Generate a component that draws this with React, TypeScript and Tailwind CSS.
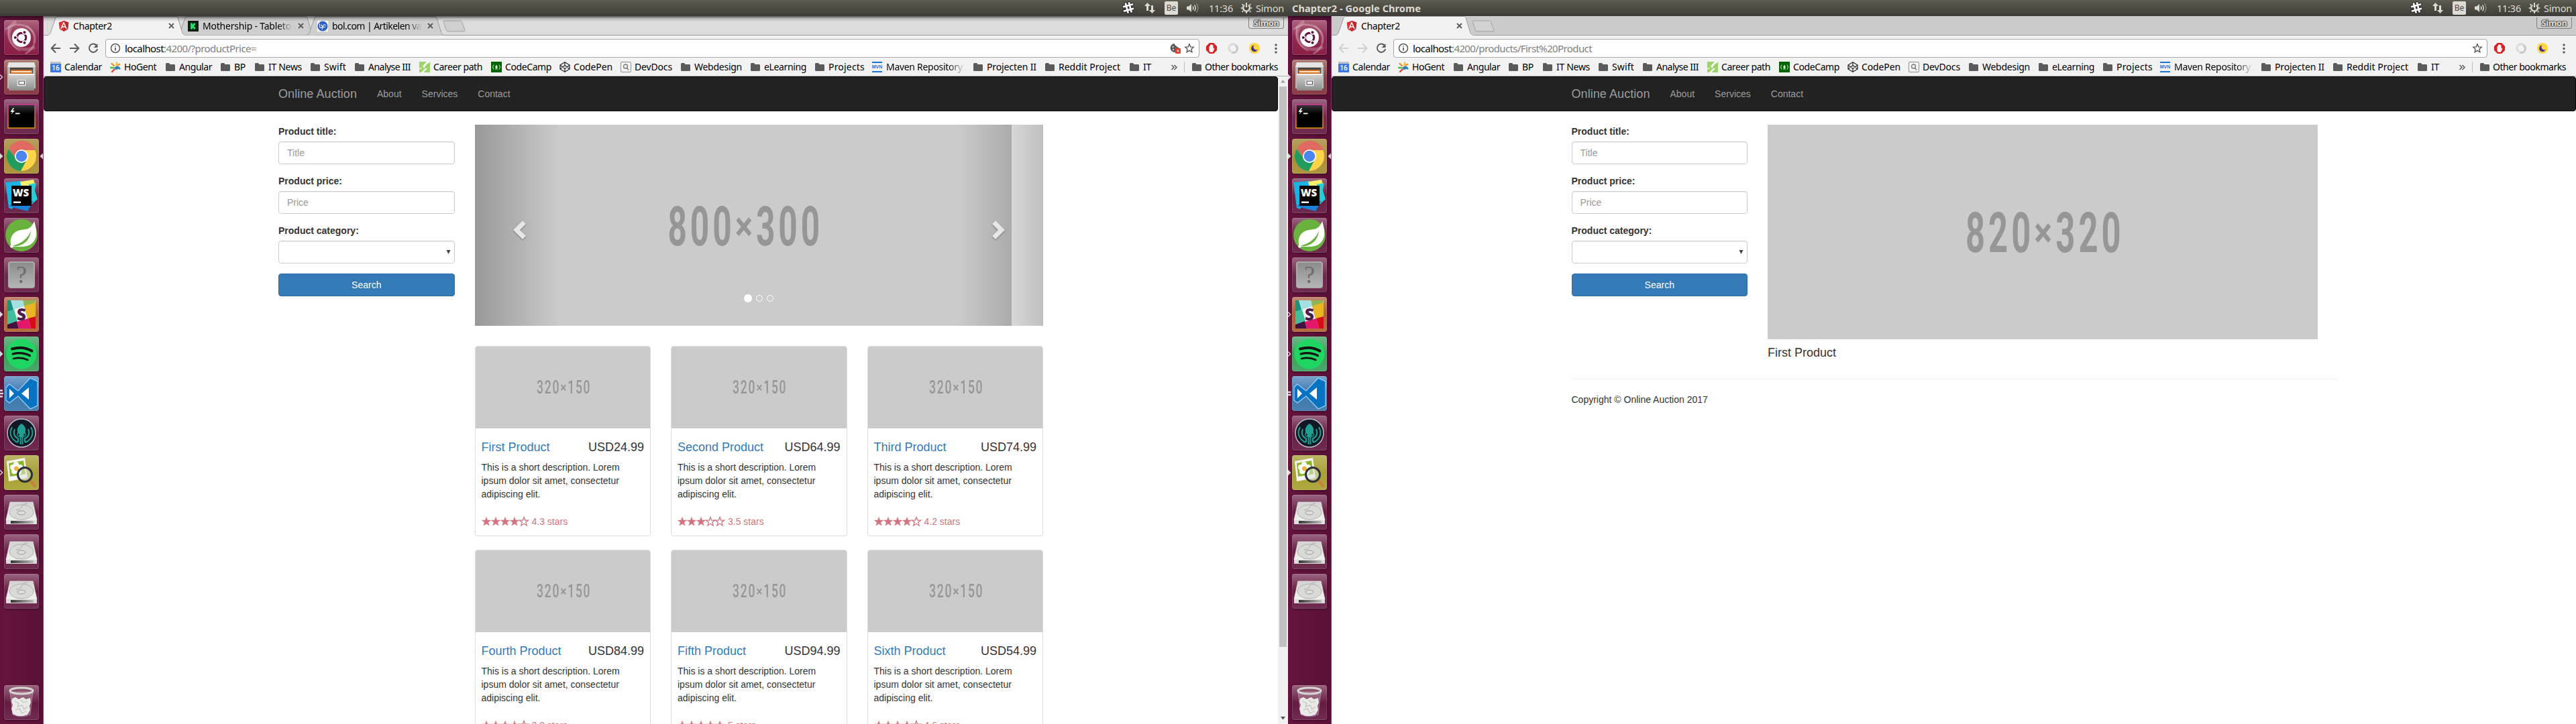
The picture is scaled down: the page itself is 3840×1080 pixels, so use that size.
import React, { useLayoutEffect, useRef, useState } from "react";

const UI = "font-['Noto_Sans','Open_Sans',sans-serif]";

/** Single line of text tracked so that it takes exactly `w` pixels. */
function Fit({ w, className = "", children }: { w: number; className?: string; children: string }) {
  const ref = useRef<HTMLSpanElement>(null);
  const [ls, setLs] = useState(0);
  useLayoutEffect(() => {
    const el = ref.current;
    if (!el) return;
    const prev = el.style.letterSpacing;
    el.style.letterSpacing = "0px";
    const n = el.getBoundingClientRect().width;
    el.style.letterSpacing = prev;
    setLs((w - n) / children.length);
  }, [w, children]);
  return (
    <span ref={ref} className={`inline-block whitespace-nowrap ${className}`} style={{ letterSpacing: `${ls}px` }}>
      {children}
    </span>
  );
}

/** Grey placeholder picture with condensed caption. */
function Placeholder({ text, w, className, textClass }: { text: string; w: number; className: string; textClass: string }) {
  const ref = useRef<HTMLSpanElement>(null);
  const [k, setK] = useState(1);
  useLayoutEffect(() => {
    if (ref.current) setK(w / ref.current.offsetWidth);
  }, [w]);
  const [a, b] = text.split("×");
  return (
    <div className={`flex items-center justify-center overflow-hidden bg-[#cbcbcb] ${className}`}>
      <span
        ref={ref}
        className={`inline-block whitespace-nowrap font-[Roboto,sans-serif] leading-none text-[#969696] ${textClass}`}
        style={{ transform: `scaleX(${k})` }}
      >
        {a}
        <span className="inline-block scale-y-[.72]">×</span>
        {b}
      </span>
    </div>
  );
}

/* ---------- top panel ---------- */

function TopPanel({ title }: { title?: string }) {
  return (
    <div className={`flex h-6 w-full items-center bg-gradient-to-b from-[#5e5b50] to-[#3d3c38] pr-1.5 text-[14.5px] leading-6 text-[#dfdbd2] ${UI}`}>
      <div className="pl-1.5 font-bold">{title && <Fit w={192}>{title}</Fit>}</div>
      <div className="ml-auto flex items-center">
        <div className="flex w-8 justify-center">
          <svg width="20" height="20" viewBox="0 0 20 20" fill="none" strokeLinecap="round">
            <g stroke="#2e2d2a" strokeWidth="5"><path d="M6 3.5l3.5 13M11 2.5l3.5 13M3 8l13-3.5M4 14.5l13-3.5" /></g>
            <g stroke="#fff" strokeWidth="2.8"><path d="M6 3.5l3.5 13M11 2.5l3.5 13M3 8l13-3.5M4 14.5l13-3.5" /></g>
          </svg>
        </div>
        <div className="flex w-8 justify-center">
          <svg width="18" height="18" viewBox="0 0 18 18" fill="#dfdbd2">
            <path d="M5.5 1L10 6H7v7H4V6H1z" /><path d="M12.500 17L8 12h3V5h3v7h3z" />
          </svg>
        </div>
        <div className="flex w-8 justify-center">
          <div className="flex h-5 w-5 items-center justify-center rounded-[2px] bg-[#dfdbd2] text-[12px] leading-none text-[#4a4843]">Be</div>
        </div>
        <div className="flex w-8 justify-center">
          <svg width="20" height="18" viewBox="0 0 20 18" fill="none" stroke="#dfdbd2" strokeWidth="1.500">
            <path d="M1 6.500h3l4-3.500v12l-4-3.500H1z" fill="#dfdbd2" stroke="none" />
            <path d="M10 6.500q1.800 2.500 0 5M12.500 4.500q3.500 4.500 0 9" /><path d="M15.500 2.500q5 6.500 0 13" opacity=".4" />
          </svg>
        </div>
        <Fit w={36} className="ml-2">11:36</Fit>
        <svg className="ml-2.5" width="20" height="18" viewBox="0 0 20 18" fill="none" stroke="#dfdbd2">
          <path d="M7 4.700a5 5 0 1 0 6 0" strokeWidth="2.400" />
          <path d="M10 1v7" strokeWidth="2" />
          <path d="M10 14.500V17M3.500 9H1.800M18.200 9h-1.700M5 13.500l-1.400 1.400M15 13.500l1.400 1.400M5 4.500L3.600 3.100M15 4.500l1.400-1.400" strokeWidth="2" />
        </svg>
        <Fit w={42} className="ml-1">Simon</Fit>
      </div>
    </div>
  );
}

/* ---------- launcher ---------- */

const DiskIcon = () => (
  <svg width="52" height="52" viewBox="0 0 52 52">
    <defs>
      <linearGradient id="dk" x1="0" y1="0" x2="0" y2="1"><stop offset="0" stopColor="#d2d2d0" /><stop offset="1" stopColor="#f2f2f0" /></linearGradient>
      <linearGradient id="dk2" x1="0" y1="0" x2="1" y2="0"><stop offset="0" stopColor="#333" /><stop offset="1" stopColor="#bbb" /></linearGradient>
    </defs>
    <path d="M9 11h34l6 27H3z" fill="url(#dk)" stroke="#e6e6e4" strokeWidth=".8" />
    <ellipse cx="26" cy="26" rx="18" ry="11" fill="#d9d9d7" stroke="#b0b0ae" strokeWidth="1" />
    <ellipse cx="26" cy="27" rx="6" ry="3" fill="#dededc" stroke="#9a9a98" strokeWidth="1" />
    <path d="M35 13C24 13 29 23 18 23" fill="none" stroke="#a8a8a6" strokeWidth="1" />
    <path d="M3 38h46v6H3z" fill="#dcdcda" /><path d="M10 39h34v4H10z" fill="url(#dk2)" />
  </svg>
);

const icons: Record<string, React.ReactNode> = {
  ubuntu: (
    <svg width="52" height="52" viewBox="0 0 52 52" fill="none">
      <path d="M2 14C18 0 42 8 46 24c2 12-6 22-14 26" stroke="#fff" strokeOpacity=".28" strokeWidth="2.500" />
      <path d="M18 2c-14 8-14 28 0 38 8 5 20 5 28 0" stroke="#fff" strokeOpacity=".22" strokeWidth="5" />
      <path d="M8 8c-4 14 0 30 16 38M32 8c10 4 14 14 12 26" stroke="#fff" strokeOpacity=".18" strokeWidth="2.500" />
      <circle cx="26" cy="26" r="14" fill="#fff" />
      <circle cx="26" cy="26" r="6.800" stroke="#5e1138" strokeWidth="3" />
      <g stroke="#fff" strokeWidth="1.500" fill="#5e1138"><circle cx="16.800" cy="26" r="2.800" /><circle cx="30.500" cy="18.200" r="2.800" /><circle cx="30.500" cy="33.800" r="2.800" /></g>
    </svg>
  ),
  files: (
    <svg width="52" height="52" viewBox="0 0 52 52">
      <defs><linearGradient id="fc" x1="0" y1="0" x2="0" y2="1"><stop offset="0" stopColor="#d4d4d2" /><stop offset="1" stopColor="#8c8c8a" /></linearGradient></defs>
      <path d="M7 4h38l2 6v33H5V10z" fill="#b9b9b7" /><path d="M7 4h38l2 7H5z" fill="#e4e4e2" />
      <path d="M9 12h34v12H9z" fill="#4b4540" /><path d="M10 15h32v7H10z" fill="#d4722c" /><path d="M11 17h30v2H11z" fill="#fbe3c0" />
      <path d="M7 21h38v25H7z" fill="url(#fc)" /><path d="M7 21h38v2H7z" fill="#f2f2f0" />
      <rect x="19.500" y="29.500" width="13" height="10" rx="2" fill="#eee" stroke="#bcbcbc" /><rect x="22" y="32" width="8.500" height="5" fill="#f6f6f6" stroke="#444" />
    </svg>
  ),
  terminal: (
    <svg width="52" height="52" viewBox="0 0 52 52">
      <defs>
        <linearGradient id="tm" x1="0" y1="0" x2="0" y2="1"><stop offset="0" stopColor="#d8399b" /><stop offset="1" stopColor="#e8980f" /></linearGradient>
        <linearGradient id="tg" x1="0" y1="0" x2="0" y2="1"><stop offset="0" stopColor="#3a3a3a" /><stop offset=".4" stopColor="#000" /></linearGradient>
      </defs>
      <rect x="6" y="8" width="40" height="35" fill="url(#tg)" stroke="url(#tm)" strokeWidth="1.500" />
      <path d="M13.500 13l-4 6h3l-2.500 4 6-6h-3l2-4zM17 20.500h6.500v1.800H17z" fill="#fff" />
    </svg>
  ),
  chrome: (
    <svg width="52" height="52" viewBox="0 0 52 52">
      <circle cx="26" cy="26" r="22" fill="#fdd34a" />
      <path d="M6.900 15A22 22 0 0 1 47 17H26a9 9 0 0 0-8 13z" fill="#e06a5f" />
      <path d="M6.900 15A22 22 0 0 0 25 48l9-17a9 9 0 0 1-16-1z" fill="#219c5e" />
      <circle cx="26" cy="26" r="10" fill="#fff" /><circle cx="26" cy="26" r="8.300" fill="#4a86ee" />
    </svg>
  ),
  webstorm: (
    <>
      <svg width="52" height="52" viewBox="0 0 52 52">
        <path d="M2 6l22-2 8 6-20 36-5-2z" fill="#1bb4e2" /><path d="M24 5l20-3 3 9-19 10z" fill="#f7ee6b" />
        <path d="M37 9l11-2-2 11 4 13-10 9-8-12z" fill="#21cfd4" /><path d="M7 42l28 7 9-15-25-4z" fill="#1a82d8" />
        <rect x="11" y="11" width="30" height="30" fill="#000" /><path d="M14 34.500h11v2.500H14z" fill="#fff" />
      </svg>
      <span className="absolute left-[13px] top-[13px] font-['Open_Sans',sans-serif] text-[15px] font-extrabold leading-4 text-white">WS</span>
    </>
  ),
  spring: (
    <svg width="52" height="52" viewBox="0 0 52 52">
      <circle cx="26" cy="26" r="24" fill="#69b23e" />
      <path d="M45 5c5 16 5 28-6 35-7 4-16 3-24 3-5 0-6-6-5-11 3-13 14-14 22-15 7-1 10-5 13-12z" fill="#fff" />
      <path d="M40 19c-4 12-14 19-28 23 15 2 27-8 28-23z" fill="#69b23e" /><circle cx="11.500" cy="42.500" r="2.200" fill="#fff" />
    </svg>
  ),
  unknown: (
    <div className="flex h-10 w-10 items-center justify-center rounded-sm border-2 border-[#aaa] bg-gradient-to-b from-[#8d8d8d] to-[#b4b4b4] font-['Liberation_Serif',serif] text-[36px] leading-none text-[#6c6c6c]">?</div>
  ),
  slack: (
    <>
      <svg width="52" height="52" viewBox="0 0 52 52">
        <path d="M5 5h42v42H5z" fill="#f7f5f7" />
        <path d="M5 5h6l4 14-10 3z" fill="#1a937d" /><path d="M10 5h18l2 9-16 5z" fill="#a4dfe4" /><path d="M28 5h19l-1 4-16 5z" fill="#93b453" />
        <path d="M30 14l17-6v22l-12 3z" fill="#ebb424" /><path d="M5 22l10-3 5 17-15 5z" fill="#3fbf9c" />
        <path d="M5 41l14-5 3 11H5z" fill="#3e1340" /><path d="M19 37l17-5 4 15H22z" fill="#e4166a" /><path d="M36 32l11-3v18h-7z" fill="#d40e18" />
      </svg>
      <span className="absolute left-[19px] top-[14px] font-['Open_Sans',sans-serif] text-[24px] font-extrabold leading-6 text-[#4b1a4e]">S</span>
    </>
  ),
  spotify: (
    <svg width="52" height="52" viewBox="0 0 52 52" fill="none" stroke="#141414" strokeLinecap="round">
      <circle cx="26" cy="26" r="22.500" fill="#1fd662" stroke="none" />
      <path d="M12 18.500c10-3 21-2 29.500 3" strokeWidth="4" /><path d="M13 26c9-2.500 18-1.500 25.500 2.500" strokeWidth="3.200" /><path d="M14 33c8-2 15.500-1 21.500 2" strokeWidth="2.600" />
    </svg>
  ),
  vscode: (
    <svg width="52" height="52" viewBox="0 0 52 52">
      <path d="M3 17l5-5 13 10L39 3l11 5v36l-11 5-18-19L8 40l-5-4z" fill="#0873c2" stroke="#9ed0f5" strokeWidth="1.200" />
      <path d="M8 19v14l7-7zM37 17v18L26 26z" fill="#fff" />
    </svg>
  ),
  kraken: (
    <svg width="52" height="52" viewBox="0 0 52 52" fill="none">
      <circle cx="26" cy="26" r="21" fill="#121826" stroke="#b9bcc0" strokeWidth="1.500" />
      <g stroke="#1fa093" strokeWidth="2">
        <path d="M12 17c-5 9-2 18 8 23M16 20c-3 8 0 12 5 14v6M40 17c5 9 2 18-8 23M36 20c3 8 0 12-5 14v6M24.500 32v11M27.500 32v11" />
      </g>
      <path d="M26 12c5 3 7 8 6 11-1 2 1 3 1 6 0 4-14 4-14 0 0-3 2-4 1-6-1-3 1-8 6-11z" fill="#1fa093" />
      <circle cx="21.500" cy="28.500" r="1.400" fill="#121826" /><circle cx="30.500" cy="28.500" r="1.400" fill="#121826" />
    </svg>
  ),
  viewer: (
    <svg width="52" height="52" viewBox="0 0 52 52" fill="none">
      <path d="M4 9l27-5 4 30-28 5z" fill="#f4f4f0" /><path d="M7 12l22-4 3 20-23 4z" fill="#8ab62c" />
      <g fill="#fff"><circle cx="18" cy="14" r="4" /><circle cx="13" cy="18" r="4" /><circle cx="15" cy="24" r="4" /><circle cx="22" cy="25" r="4" /><circle cx="24" cy="18" r="4" /></g>
      <circle cx="18.500" cy="20" r="3.500" fill="#f0b52c" />
      <path d="M38 37l8 9" stroke="#c77f3a" strokeWidth="4" strokeLinecap="round" />
      <circle cx="31" cy="29" r="10.500" fill="#dfe8dc" fillOpacity=".55" stroke="#2b3036" strokeWidth="3" />
    </svg>
  ),
  disk: <DiskIcon />,
  trash: (
    <svg width="52" height="52" viewBox="0 0 52 52" fill="none">
      <path d="M9 10h34l-4 34q-13 6-26 0z" fill="#fff" fillOpacity=".22" stroke="#fff" strokeOpacity=".3" />
      <path d="M12 20l5-2 5 3 6-3 5 3 6-2 1 7-2 5 1 6-4 7-7 2-8 0-7-3-2-8 2-5-2-5z" fill="#e9e9e7" />
      <path d="M16 24l6 3-2 5 7-2 3 6 5-4M17 37l6-2 4 7 6-3M25 22l4 4 6-2" stroke="#c2c2c0" strokeWidth="1.300" />
      <ellipse cx="26" cy="8.500" rx="17" ry="4.500" stroke="#d6d6d4" strokeWidth="3" />
    </svg>
  ),
};

type Mark = "open" | "full" | "bars3" | "bars2" | undefined;
const tiles: { icon: string; bg: string; m: [Mark, Mark] }[] = [
  { icon: "ubuntu", bg: "from-[#b0647f] via-[#8f2850] to-[#8c1f48]", m: [undefined, undefined] },
  { icon: "files", bg: "from-[#b08078] via-[#8a4448] to-[#8c3c48]", m: ["open", "full"] },
  { icon: "terminal", bg: "from-[#9a6580] via-[#6f2a4c] to-[#702c50]", m: [undefined, undefined] },
  { icon: "chrome", bg: "from-[#b3a05f] via-[#b08c3a] to-[#ac9440]", m: ["full", "full"] },
  { icon: "webstorm", bg: "from-[#9a6580] via-[#661c42] to-[#702c50]", m: [undefined, undefined] },
  { icon: "spring", bg: "from-[#9a6580] via-[#661c42] to-[#702c50]", m: [undefined, undefined] },
  { icon: "unknown", bg: "from-[#9a6580] via-[#6c2a4a] to-[#702c50]", m: [undefined, undefined] },
  { icon: "slack", bg: "from-[#c08a70] via-[#b0603c] to-[#b86c40]", m: ["full", "open"] },
  { icon: "spotify", bg: "from-[#6cb888] via-[#38a058] to-[#4aa86c]", m: ["full", "open"] },
  { icon: "vscode", bg: "from-[#7aa4cc] via-[#3a78b0] to-[#4a80b0]", m: ["bars3", "bars2"] },
  { icon: "kraken", bg: "from-[#9a6580] via-[#661c42] to-[#702c50]", m: [undefined, undefined] },
  { icon: "viewer", bg: "from-[#bdb668] via-[#a8a034] to-[#b0a840]", m: ["open", "full"] },
  { icon: "disk", bg: "from-[#9a6580] via-[#661c42] to-[#702c50]", m: [undefined, undefined] },
  { icon: "disk", bg: "from-[#9a6580] via-[#661c42] to-[#702c50]", m: [undefined, undefined] },
  { icon: "disk", bg: "from-[#9a6580] via-[#661c42] to-[#702c50]", m: [undefined, undefined] },
];

function MarkShape({ m }: { m: Mark }) {
  if (!m) return null;
  return (
    <svg className="absolute -left-1.5 top-5" width="5" height="12" viewBox="0 0 5 12" fill="none">
      {m === "full" && <path d="M0 1.500v9L4.500 6z" fill="#ddd5da" />}
      {m === "open" && <path d="M0 2.500L3.700 6 0 9.500" stroke="#ddd5da" strokeWidth="1.300" />}
      {m === "bars3" && <path d="M0 1.500h4M0 6h5M0 10.500h4" stroke="#ddd5da" strokeWidth="2.400" />}
      {m === "bars2" && <path d="M0 4h4.500M0 8h4.500" stroke="#ddd5da" strokeWidth="2.400" />}
    </svg>
  );
}

function Tile({ icon, bg, m, focused }: { icon: string; bg: string; m?: Mark; focused?: boolean }) {
  return (
    <div className={`relative flex h-[52px] w-[52px] shrink-0 items-center justify-center rounded bg-gradient-to-b shadow-[0_1px_3px_rgba(0,0,0,.45),inset_0_0_0_1px_rgba(255,255,255,.13)] ${bg}`}>
      {icons[icon]}
      <MarkShape m={m} />
      {focused && (
        <svg className="absolute -right-[6px] top-5" width="5" height="12" viewBox="0 0 5 12"><path d="M5 1.500v9L.5 6z" fill="#ddd5da" /></svg>
      )}
    </div>
  );
}

function Launcher({ screen }: { screen: 0 | 1 }) {
  return (
    <div className="flex w-[65px] shrink-0 flex-col gap-[7px] border-r border-[#7c3f68] bg-gradient-to-r from-[#66143c] to-[#5b1035] pb-1.5 pl-1.5 pt-1.5 shadow-[inset_0_5px_5px_-3px_rgba(0,0,0,.6)]">
      {tiles.map((t, i) => (
        <Tile key={i} icon={t.icon} bg={t.bg} m={t.m[screen]} focused={t.icon === "chrome"} />
      ))}
      <div className="mt-auto">
        <Tile icon="trash" bg="from-[#9a6580] via-[#661c42] to-[#702c50]" />
      </div>
    </div>
  );
}

/* ---------- browser chrome ---------- */

const AngularIcon = () => (
  <svg width="16" height="16" viewBox="0 0 16 16">
    <path d="M8 0l7.300 2.600-1.100 9.600L8 16l-6.200-3.800L.7 2.600z" fill="#dd3138" /><path d="M8 0l7.300 2.600-1.100 9.600L8 16z" fill="#b9292f" />
    <path d="M8 2.500L4 12M8 2.500L12 12M5.600 9h4.800" stroke="#fff" strokeWidth="1.500" fill="none" />
  </svg>
);
const KickIcon = () => (
  <svg width="16" height="16" viewBox="0 0 16 16"><path d="M0 0h16v16H0z" fill="#0d1f12" /><path d="M5.500 3.500v9M10.800 4L7 8l3.800 4" stroke="#2bde73" strokeWidth="2.800" fill="none" /></svg>
);
const BolIcon = () => (
  <svg width="16" height="16" viewBox="0 0 16 16" fill="none"><path d="M0 0h16v16H0z" fill="#fff" /><circle cx="8" cy="8" r="7.500" fill="#2b62c9" /><path d="M3.500 4v5a2 2 0 1 0 1.500-2.500M12.500 7.500a2 2 0 1 0-3 2h2.500M7 13l2-6" stroke="#dbe6fa" strokeWidth="1.100" /></svg>
);

type TabData = { icon: React.ReactNode; text: string; w: number; fade?: boolean };

function Tab({ tab, active }: { tab: TabData; active: boolean }) {
  const fill = active ? "#f2f2f2" : "#cfcfcf";
  return (
    <div className={`relative -mr-3 h-[29px] w-[205px] ${active ? "z-10" : ""}`}>
      <svg className="absolute inset-0" width="205" height="29" viewBox="0 0 205 29">
        <path d="M.5 28.500Q3 28 4 25.500L12 2.500Q13 .5 15 .5H191Q193 .5 194 2.500L201 25.500Q202 28 205 28.500" fill={fill} stroke="#9c9c9c" />
        {active && <path d="M1.500 28.500H204" stroke={fill} strokeWidth="1.400" />}
      </svg>
      <div className="relative flex h-full items-center pl-4 pr-[15px]">
        {tab.icon}
        <div className={`ml-[6px] w-[134px] overflow-hidden text-[14px] leading-5 ${tab.fade ? "[mask-image:linear-gradient(90deg,#000_84%,transparent)]" : ""}`}>
          <Fit w={tab.w}>{tab.text}</Fit>
        </div>
        <svg className="ml-2" width="9" height="9" viewBox="0 0 9 9" stroke="#5a5a5a" strokeWidth="1.800"><path d="M1 1l7 7M8 1L1 8" /></svg>
      </div>
    </div>
  );
}

const Folder = () => (
  <svg width="16" height="16" viewBox="0 0 16 16" fill="#5a5a5a"><path d="M1 3.500q0-1.500 1.500-1.500H6l1.500 2H13.500Q15 4 15 5.500v7Q15 14 13.500 14h-11Q1 14 1 12.500z" /></svg>
);

const marks: Record<string, React.ReactNode> = {
  Calendar: (
    <div className="flex h-4 w-4 flex-col bg-[#3b78e7] text-center font-[Roboto,sans-serif] text-[10px] font-medium leading-[13px] text-white"><i className="h-[3px] w-full bg-[#c4c4c4]" />16</div>
  ),
  HoGent: (
    <svg width="16" height="16" viewBox="0 0 16 16" fill="none" strokeLinecap="round" strokeWidth="2.300">
      <path d="M9.500 5.500L10 1.500" stroke="#f7c51e" /><path d="M6 6L2.500 3" stroke="#f08a24" /><path d="M5.500 9H1" stroke="#54b948" /><path d="M6.500 11.500L3 15" stroke="#e03c31" /><path d="M12 5l2-1" stroke="#f08a24" />
      <path d="M7 9.500c3-5 8-2 8 2-2-2-3 0-4-1-1 2-3 1-4-1z" fill="#2a7fb5" stroke="#2a7fb5" strokeWidth="1" />
    </svg>
  ),
  "Career path": (
    <svg width="16" height="16" viewBox="0 0 16 16"><rect width="16" height="16" rx="1" fill="#9bd36a" /><path d="M11 0L4 7.500h3L6 10l4-2.500H7.500L16 0zM0 10l4-1.500L2 11H0zM9 10h3l-6 6H3z" fill="#fff" /></svg>
  ),
  CodeCamp: (
    <svg width="16" height="16" viewBox="0 0 16 16" fill="none" stroke="#cfe8cf"><path d="M0 0h16v16H0z" fill="#006400" stroke="none" /><path d="M4 4.500q-3 3.500 0 7M12 4.500q3 3.500 0 7M6 11h4" /><path d="M8 4.500q3 4 1 5.500H7q-2-2 1-5.500z" fill="#cfe8cf" stroke="none" /></svg>
  ),
  CodePen: (
    <svg width="16" height="16" viewBox="0 0 16 16" fill="none" stroke="#2c2c2c" strokeWidth="1.300" strokeLinejoin="round"><path d="M8 .8l7 4.200v6l-7 4.200L1 11V5zM8 .8v4.700M8 10.500v4.700M1 5l7 5.500L15 5M1 11l7-5.500 7 5.500" /></svg>
  ),
  DevDocs: (
    <svg width="16" height="16" viewBox="0 0 16 16" fill="none"><rect x=".5" y=".5" width="15" height="15" rx="1.500" fill="#f4f4f4" stroke="#8e8e8e" /><circle cx="7.500" cy="7" r="3" stroke="#777" strokeWidth="1.300" /><path d="M9.500 9.500l2.500 3" stroke="#777" strokeWidth="1.600" /></svg>
  ),
  "Maven Repository:": (
    <div className="flex h-4 w-[15px] flex-col items-center justify-center border-y-2 border-[#1976d2] font-['Liberation_Sans',sans-serif] text-[7px] font-bold leading-[8px] text-[#1976d2]">MVN</div>
  ),
};

/* [label, text width, cell width] */
const bookmarks: [string, number, number][] = [
  ["Calendar", 56, 89], ["HoGent", 48, 82], ["Angular", 49, 82], ["BP", 17, 51], ["IT News", 50, 83], ["Swift", 33, 66],
  ["Analyse III", 63, 97], ["Career path", 73, 107], ["CodeCamp", 69, 102], ["CodePen", 58, 91], ["DevDocs", 56, 89],
  ["Webdesign", 71, 104], ["eLearning", 63, 96], ["Projects", 54, 86], ["Maven Repository:", 117, 150], ["Projecten II", 74, 107],
  ["Reddit Project", 92, 126], ["IT", 12, 63],
];

function Browser({ tabs, path, pathW, focused, children }: { tabs: TabData[]; path: string; pathW: number; focused: boolean; children: React.ReactNode }) {
  const nav = focused ? "#d0d0d0" : "#5a5a5a";
  return (
    <div className="flex min-w-0 grow flex-col bg-white">
      <div className={`shrink-0 text-black ${UI}`}>
        <div className={`relative flex h-[29px] border-b border-[#9c9c9c] pl-1.5 ${focused ? "bg-[#cbcbcb]" : "bg-[#dcdcdc]"}`}>
          {tabs.map((t, i) => <Tab key={i} tab={t} active={i === 0} />)}
          <svg className="ml-[9px] mt-[6px]" width="36" height="18" viewBox="0 0 36 18"><path d="M3 1h24q2 0 2.500 1.500L34 15q.4 1.800-1.500 1.800H9Q7 16.800 6.400 15L2 2.500Q1.500 1 3 1z" fill={focused ? "#d2d2d2" : "#cfcfcf"} stroke="#a2a2a2" /></svg>
          <div className="ml-auto mr-1.5 mt-0.5 flex h-[17px] w-[53px] items-center justify-center rounded-b border border-t-0 border-[#808080] text-[13px] font-bold leading-none text-[#e0e0e0] [text-shadow:0_0_1px_#333,0_0_1px_#333,0_0_1px_#333,0_0_2px_#333,0_0_2px_#333]">
            <Fit w={38}>Simon</Fit>
          </div>
          {!focused && <div className="absolute inset-x-0 top-0 z-20 h-2 bg-gradient-to-b from-black/60 via-black/15 to-transparent" />}
        </div>
        <div className="flex h-[37px] items-center bg-[#f2f2f2] pl-1 pr-0.5">
          <div className="flex w-7 justify-center"><svg width="16" height="16" viewBox="0 0 16 16" fill="none" stroke={nav} strokeWidth="2"><path d="M8 1.500L1.700 8 8 14.500M2 8h13" /></svg></div>
          <div className="flex w-7 justify-center"><svg width="16" height="16" viewBox="0 0 16 16" fill="none" stroke={nav} strokeWidth="2"><path d="M8 1.500L14.300 8 8 14.500M14 8H1" /></svg></div>
          <div className="flex w-7 justify-center"><svg width="16" height="16" viewBox="0 0 16 16" fill="none" stroke="#5a5a5a" strokeWidth="2"><path d="M12.800 3.600A6.200 6.200 0 1 0 14.200 9" /><path d="M14.500 1v6h-6z" fill="#5a5a5a" stroke="none" /></svg></div>
          <div className="ml-1 mr-0.5 flex h-7 grow items-center rounded-sm border border-[#a6a6a6] bg-white pl-[6px] pr-[6px] text-[15px] leading-6">
            <svg width="16" height="16" viewBox="0 0 16 16" fill="none" stroke="#5a5a5a" strokeWidth="1.500"><circle cx="8" cy="8" r="6.500" /><path d="M8 7v4.500M8 4.200v1.600" strokeWidth="1.700" /></svg>
            <Fit w={58} className="ml-[6px]">localhost</Fit>
            <Fit w={pathW} className="text-[#808080]">{path}</Fit>
            <div className="ml-auto flex items-center gap-[5px]">
              {!focused && (
                <svg width="16" height="16" viewBox="0 0 16 16"><path d="M7 1a6.500 6.500 0 1 0 6.500 6.500q-1.500 0-1.800-1.500-2 .3-2.200-1.800Q7 4 7 1z" fill="#5a5a5a" /><circle cx="4.500" cy="6" r="1" fill="#fff" /><circle cx="5" cy="10" r="1" fill="#fff" /><rect x="8" y="8" width="8" height="8" rx="1" fill="#d9402f" /><path d="M10.500 10.500l3 3M13.500 10.500l-3 3" stroke="#fff" /></svg>
              )}
              <svg width="16" height="16" viewBox="0 0 16 16" fill="none" stroke="#5a5a5a" strokeWidth="1.400"><path d="M8 1.800l1.800 4.100 4.400.4-3.300 3 1 4.400L8 11.400l-3.900 2.300 1-4.400-3.300-3 4.400-.4z" /></svg>
            </div>
          </div>
          <div className="flex w-8 justify-center"><svg width="16" height="16" viewBox="0 0 16 16"><path d="M5 0h6l5 5v6l-5 5H5l-5-5V5z" fill="#e01b1b" /><path d="M4.500 9V5q.8-1 1.500 0V3q.8-1 1.500 0v-.500q.8-1 1.500 0V3.500q.8-1 1.500 0V9l1-1.500q1.200-.3 1 .8L10.500 13q-1 1-3 1-2.500 0-3-2z" fill="#fff" /></svg></div>
          <div className="flex w-8 justify-center"><svg width="16" height="16" viewBox="0 0 16 16" fill="none"><path d="M11 2.500A6 6 0 0 0 5 13" stroke="#dadada" strokeWidth="3" /><path d="M11 3a5.500 5.500 0 0 1-5 11" stroke="#c8c8c8" strokeWidth="3" /></svg></div>
          <div className="flex w-8 justify-center"><svg width="16" height="16" viewBox="0 0 16 16"><circle cx="8" cy="8" r="8" fill="#fcd53f" /><path d="M7.500 3.500a4.800 4.800 0 1 0 5 6.500A4.200 4.200 0 0 1 7.500 3.500z" fill="#43308c" /></svg></div>
          <div className="flex w-8 justify-center"><svg width="4" height="16" viewBox="0 0 4 16" fill="#5a5a5a"><circle cx="2" cy="3" r="1.700" /><circle cx="2" cy="8.500" r="1.700" /><circle cx="2" cy="14" r="1.700" /></svg></div>
        </div>
        <div className="flex h-6 items-start border-b border-[#b0b0b0] bg-[#f2f2f2] pl-2.5 text-[14px] leading-5">
          {bookmarks.map(([label, w, cell]) => (
            <div key={label} className="flex shrink-0 items-center gap-[5px]" style={{ width: cell }}>
              <div className="w-4 shrink-0">{marks[label] ?? <Folder />}</div>
              <div className={label.startsWith("Maven") ? "[mask-image:linear-gradient(90deg,#000_80%,transparent)]" : ""}><Fit w={w}>{label}</Fit></div>
            </div>
          ))}
          <svg className="mt-1.5" width="9" height="9" viewBox="0 0 9 9" fill="none" stroke="#5a5a5a" strokeWidth="1.500"><path d="M.5 1L4 4.500.5 8M4.500 1L8 4.500 4.500 8" /></svg>
          <div className="ml-2.5 mt-0.5 h-4 w-px bg-[#bdbdbd]" />
          <div className="ml-2.5 flex items-center gap-1 self-start"><Folder /><Fit w={109}>Other bookmarks</Fit></div>
        </div>
      </div>
      <div className="flex min-h-0 grow overflow-hidden font-['Liberation_Sans',Arial,sans-serif] text-[14px] leading-5 text-[#333]">{children}</div>
    </div>
  );
}

/* ---------- auction site ---------- */

function NavBar() {
  return (
    <div className="mb-5 h-[52px] rounded border border-[#080808] bg-[#222] text-[#9d9d9d]">
      <div className="mx-auto flex h-[50px] w-[1170px] items-center px-[15px]">
        <span className="mr-[30px] text-[18px]"><Fit w={117}>Online Auction</Fit></span>
        <span className="mr-[30px]">About</span>
        <span className="mr-[30px]">Services</span>
        <span>Contact</span>
      </div>
    </div>
  );
}

const field = "mb-[15px] flex h-[34px] items-center justify-between rounded border border-[#ccc] pl-3 pr-[5px] text-[#999] shadow-[inset_0_1px_1px_rgba(0,0,0,.075)]";

function SearchForm() {
  return (
    <div className="w-[262.5px] shrink-0">
      <div className="mb-[5px] font-bold">Product title:</div>
      <div className={field}>Title</div>
      <div className="mb-[5px] font-bold">Product price:</div>
      <div className={field}>Price</div>
      <div className="mb-[5px] font-bold">Product category:</div>
      <div className={field}>
        <span />
        <svg width="7" height="6" viewBox="0 0 7 6"><path d="M.5 0h6l-3 6z" fill="#444" /></svg>
      </div>
      <div className="flex h-[34px] items-center justify-center rounded border border-[#2e6da4] bg-[#337ab7] text-white">Search</div>
    </div>
  );
}

function Stars({ n }: { n: number }) {
  return (
    <span className="flex">
      {[1, 2, 3, 4, 5].map((i) => (
        <svg key={i} className="overflow-visible" width="14" height="14" viewBox="0 0 14 14" fill="none">
          <path d="M7 .4l1.700 4.600 5 .1-4 3 1.500 4.900L7 10.200 2.800 13l1.500-4.900-4-3 5-.1z" fill={i <= n ? "#d17581" : "none"} stroke="#d17581" strokeWidth={i <= n ? 0.5 : 1.3} />
        </svg>
      ))}
    </span>
  );
}

const products = [
  { title: "First Product", price: "24.99", stars: 4, rating: "4.3" },
  { title: "Second Product", price: "64.99", stars: 3, rating: "3.5" },
  { title: "Third Product", price: "74.99", stars: 4, rating: "4.2" },
  { title: "Fourth Product", price: "84.99", stars: 4, rating: "3.9" },
  { title: "Fifth Product", price: "94.99", stars: 5, rating: "5" },
  { title: "Sixth Product", price: "54.99", stars: 4, rating: "4.6" },
];

function ProductCard({ p }: { p: (typeof products)[number] }) {
  return (
    <div className="h-[284px] overflow-hidden rounded border border-[#ddd]">
      <Placeholder text="320×150" w={81} className="h-[122px] pl-[3px]" textClass="text-[27px] font-medium tracking-[.1em]" />
      <div className="px-[9px] pt-[18px]">
        <div className="flex justify-between text-[18px]">
          <span className="text-[#337ab7]">{p.title}</span>
          <span>USD{p.price}</span>
        </div>
        <p className="mt-[10px] h-[81px]">This is a short description. Lorem ipsum dolor sit amet, consectetur adipiscing elit.</p>
        <div className="flex items-center gap-[5px] text-[#d17581]">
          <Stars n={p.stars} />
          <span>{p.rating} stars</span>
        </div>
      </div>
    </div>
  );
}

function Chevron({ flip }: { flip?: boolean }) {
  return (
    <svg className={`drop-shadow-[0_1px_1px_rgba(0,0,0,.4)] ${flip ? "-scale-x-100" : ""}`} width="19" height="28" viewBox="0 0 19 28"><path d="M14 0l5 5-9 9 9 9-5 5L0 14z" fill="#e6e6e6" /></svg>
  );
}

function HomePage() {
  return (
    <>
      <div className="min-w-0 grow">
        <NavBar />
        <div className="mx-auto flex w-[1140px] gap-[30px]">
          <SearchForm />
          <div className="w-[847.5px]">
            <div className="relative mb-[30px] h-[300px]">
              <Placeholder text="800×300" w={232} className="h-[300px] w-[800px] pl-[7px] pt-[4px]" textClass="text-[81px] font-bold tracking-[.1em]" />
              <div className="absolute inset-y-0 left-0 flex w-[127px] items-center justify-center bg-gradient-to-r from-black/25 to-transparent pl-[7px] pt-[13px]"><Chevron /></div>
              <div className="absolute inset-y-0 right-0 flex w-[127px] items-center justify-center bg-gradient-to-l from-black/25 to-transparent pr-[7px] pt-[13px]"><Chevron flip /></div>
              <div className="absolute inset-x-0 bottom-[35px] flex items-center justify-center gap-[6px] pr-px">
                <i className="h-3 w-3 rounded-full bg-white" />
                <i className="h-2.5 w-2.5 rounded-full border border-white" />
                <i className="h-2.5 w-2.5 rounded-full border border-white" />
              </div>
            </div>
            <div className="grid grid-cols-3 gap-x-[30px] gap-y-5">
              {products.map((p) => <ProductCard key={p.title} p={p} />)}
            </div>
          </div>
        </div>
      </div>
      <div className="flex w-[15px] shrink-0 flex-col items-center bg-[#f1f1f1]">
        <svg className="my-[5px] shrink-0" width="7" height="5" viewBox="0 0 7 5"><path d="M3.500 0L7 4.500H0z" fill="#a3a3a3" /></svg>
        <div className="h-[836px] w-[11px] shrink-0 bg-[#c1c1c1]" />
        <svg className="mb-[6px] mt-auto" width="7" height="5" viewBox="0 0 7 5"><path d="M3.500 4.500L7 0H0z" fill="#505050" /></svg>
      </div>
    </>
  );
}

function DetailPage() {
  return (
    <div className="min-w-0 grow">
      <NavBar />
      <div className="mx-auto w-[1140px]">
        <div className="flex gap-[30px]">
          <SearchForm />
          <div>
            <Placeholder text="820×320" w={237} className="h-[320px] w-[820px] pl-[6px] pt-[3px]" textClass="text-[84px] font-bold tracking-[.1em]" />
            <div className="mt-[10px] text-[18px]">First Product</div>
          </div>
        </div>
        <div className="mt-[29px] border-t border-[#eee]" />
        <p className="mt-5">Copyright © Online Auction 2017</p>
      </div>
    </div>
  );
}

export default function App() {
  return (
    <div className="flex h-[1080px] w-[3840px] overflow-hidden bg-white">
      <div className="flex w-[1920px] flex-col">
        <TopPanel />
        <div className="flex min-h-0 grow">
          <Launcher screen={0} />
          <Browser
            focused={false}
            path=":4200/?productPrice="
            pathW={138}
            tabs={[
              { icon: <AngularIcon />, text: "Chapter2", w: 58 },
              { icon: <KickIcon />, text: "Mothership - Tableto", w: 132, fade: true },
              { icon: <BolIcon />, text: "bol.com | Artikelen va", w: 133, fade: true },
            ]}
          >
            <HomePage />
          </Browser>
        </div>
      </div>
      <div className="flex w-[1920px] flex-col">
        <TopPanel title="Chapter2 - Google Chrome" />
        <div className="flex min-h-0 grow">
          <Launcher screen={1} />
          <Browser focused path=":4200/products/First%20Product" pathW={209} tabs={[{ icon: <AngularIcon />, text: "Chapter2", w: 58 }]}>
            <DetailPage />
          </Browser>
        </div>
      </div>
    </div>
  );
}
